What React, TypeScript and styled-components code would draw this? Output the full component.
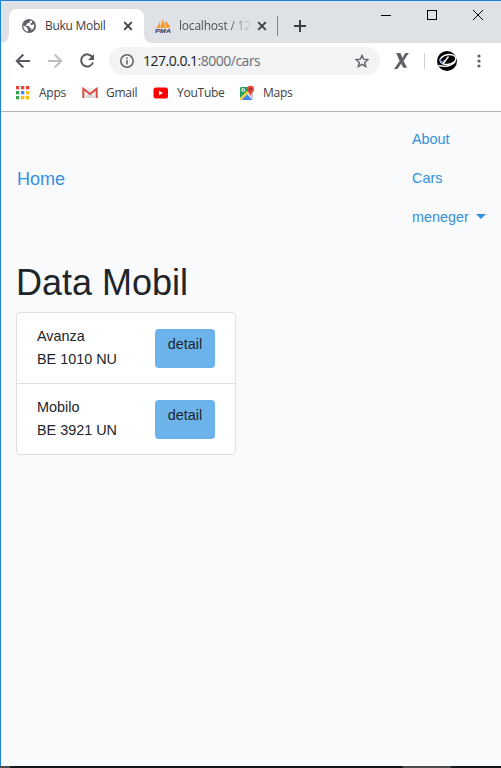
import React from 'react';
import styled, { createGlobalStyle } from 'styled-components';

const GlobalStyle = createGlobalStyle`
  * { box-sizing: border-box; }
  html, body { margin: 0; padding: 0; overflow: hidden; }
  svg { display: block; flex: none; }
`;

const Desktop = styled.div`
  width: 501px;
  height: 768px;
  display: flex;
  flex-direction: column;
  background: #111820;
`;

const BrowserWindow = styled.div`
  height: 766px;
  display: flex;
  flex-direction: column;
  border-top: 1px solid #1883d7;
  border-left: 1px solid #1883d7;
  background: #fff;
  font-family: 'Open Sans', 'Noto Sans', sans-serif;
  font-size: 12px;
  color: #3c4043;
`;

const TabStrip = styled.div`
  height: 42px;
  flex: none;
  display: flex;
  align-items: flex-end;
  background: #dee1e6;
`;

const Flare = styled.svg`
  width: 8px;
  height: 8px;
`;

const Tab = styled.div<{ $active?: boolean }>`
  height: 34px;
  width: ${p => (p.$active ? 135 : 125)}px;
  display: flex;
  align-items: center;
  padding-left: ${p => (p.$active ? 13 : 3)}px;
  background: ${p => (p.$active ? '#fff' : 'transparent')};
  border-radius: 8px 8px 0 0;
`;

const TabTitle = styled.span<{ $fade?: boolean }>`
  width: ${p => (p.$fade ? 71 : 70)}px;
  flex: none;
  margin-left: ${p => (p.$fade ? 7 : 9)}px;
  margin-right: ${p => (p.$fade ? 4 : 5)}px;
  line-height: 18px;
  letter-spacing: ${p => (p.$fade ? '-0.2px' : '-0.28px')};
  white-space: nowrap;
  color: ${p => (p.$fade ? '#4d5156' : '#3c4043')};
  mask-image: ${p => (p.$fade ? 'linear-gradient(90deg, #000 50px, transparent 73px)' : 'none')};
`;

const Separator = styled.i<{ $tab?: boolean }>`
  width: 1px;
  height: ${p => (p.$tab ? 20 : 16)}px;
  background: ${p => (p.$tab ? '#808489' : '#cfd1d4')};
  margin: ${p => (p.$tab ? '0 0 7px' : '0 12px 0 15px')};
`;

const NewTab = styled.div`
  height: 34px;
  display: flex;
  align-items: center;
  margin-left: 16px;
`;

const Controls = styled.div`
  align-self: flex-start;
  display: flex;
  gap: 36px;
  margin: 9px 18px 0 auto;
`;

const Toolbar = styled.div`
  height: 36px;
  flex: none;
  display: flex;
  align-items: center;
  padding-left: 14px;
`;

const NavIcons = styled.div`
  display: flex;
  gap: 16px;
  width: 94px;
`;

const AddressBar = styled.div`
  width: 271px;
  height: 28px;
  border-radius: 14px;
  display: flex;
  align-items: center;
  padding: 0 11px;
  background: #f1f3f4;
`;

const Address = styled.span`
  flex: 1;
  margin-left: 9px;
  font-size: 14px;
  line-height: 20px;
  letter-spacing: -0.5px;
  color: #202124;
`;

const AddressPath = styled.span`
  color: #6b6f74;
`;

const ExtensionIcon = styled.svg`
  margin-left: 14px;
`;

const MenuIcon = styled.svg`
  margin-left: 20px;
`;

const Bookmarks = styled.div`
  height: 33px;
  flex: none;
  display: flex;
  align-items: center;
  padding: 0 0 4px 13px;
  border-bottom: 1px solid #b2b4b6;
`;

const Bookmark = styled.div<{ $width: number; $gap: number }>`
  width: ${p => p.$width}px;
  display: flex;
  align-items: center;
  gap: ${p => p.$gap}px;
  line-height: 18px;
  letter-spacing: -0.25px;
`;

const Page = styled.main`
  flex: 1;
  background: #f8fafc;
  padding-left: 15px;
  font-family: 'Liberation Sans', Arial, sans-serif;
  font-size: 14.4px;
  line-height: 23px;
  color: #212529;
`;

const Navbar = styled.nav`
  height: 133px;
  display: flex;
  align-items: center;
  justify-content: space-between;
  padding: 8px 16px 8px 1px;
  color: #3490dc;
`;

const Brand = styled.a`
  padding-top: 2px;
  font-size: 18px;
  line-height: 29px;
`;

const NavList = styled.div`
  width: 73px;
`;

const NavLink = styled.a`
  display: flex;
  align-items: center;
  padding: 8px 0;
  white-space: nowrap;
`;

const Caret = styled.i`
  margin: 0 0 3px 7px;
  border: 5px solid transparent;
  border-top-color: #3490dc;
  border-bottom: 0;
`;

const Heading = styled.h1`
  margin: 16px 0 8px;
  font-size: 36px;
  line-height: 43px;
  font-weight: 400;
`;

const CarList = styled.div`
  width: 220px;
  border: 1px solid #dfdfdf;
  border-radius: 4px;
  background: #fff;
`;

const CarRow = styled.div`
  display: flex;
  justify-content: space-between;
  padding: 12px 20px;
  & + & { border-top: 1px solid #dfdfdf; }
`;

const DetailButton = styled.a`
  width: 60px;
  height: 39px;
  margin-top: 4px;
  padding-top: 4px;
  border-radius: 4px;
  background: #6cb2eb;
  text-align: center;
`;

const Taskbar = styled.div`
  height: 2px;
  display: flex;
  justify-content: space-between;
  padding-right: 50px;
`;

const TaskItem = styled.i<{ $width: number }>`
  width: ${p => p.$width}px;
  background: #4a4d50;
`;

const CloseIcon = () => (
  <svg width="16" height="16" viewBox="0 0 16 16" stroke="#3c4043" strokeWidth="1.9"><path d="M4.2 4.2l7.6 7.6M11.8 4.2l-7.6 7.6" /></svg>
);

const GlobeIcon = () => (
  <svg width="14" height="14" viewBox="0 0 14 14">
    <circle cx="7" cy="7" r="7" fill="#5f6368" />
    <path d="M8 1.4v1.3L6.4 4.2H5v1.5H3.7V7h3.8v2H9v1.5h1.3c1.9-1.6 2.3-3.8 1.7-5h-1.8v.6H8.7V3.9h1.4V2.2A6 6 0 0 0 8 1.4zM1.4 6.4v1.8c.6 2.4 2.5 4.1 4.7 4.4v-2.3H5.2V8.6z" fill="#fff" />
  </svg>
);

const PmaIcon = () => (
  <svg width="17" height="16" viewBox="0 0 17 16">
    <path d="M1 10c2-2 3-4 4-7l.5 7zM5.5 10L7.5 1C9 4 10 6.5 10.5 10zM11 9.8L10 3c2.5 1.6 4.5 4 5.5 6.8z" fill="#f79a32" />
    <text x="0" y="15.3" fontFamily="Liberation Sans" fontSize="5.8" fontWeight="700" fontStyle="italic" fill="#30365f" textLength="16" lengthAdjust="spacingAndGlyphs">PMA</text>
  </svg>
);

const appColors = ['#ea4335', '#ea4335', '#ea4335', '#34a853', '#4285f4', '#fbbc05', '#34a853', '#fbbc05', '#fbbc05'];

const AppsIcon = () => (
  <svg width="18" height="14" viewBox="0 0 18 14">
    {appColors.map((c, i) => <rect key={i} x={2 + (i % 3) * 5} y={Math.floor(i / 3) * 5} width="3.3" height="3.3" fill={c} />)}
  </svg>
);

const GmailIcon = () => (
  <svg width="16" height="14" viewBox="0 0 16 14">
    <path d="M1 2h14v10H1z" fill="#eeeeee" /><path d="M2 12l6-5 6 5z" fill="#d8d8d8" />
    <path d="M1.3 12V2.7L8 8l6.7-5.3V12" fill="none" stroke="#da4c43" strokeWidth="2" />
  </svg>
);

const YoutubeIcon = () => (
  <svg width="16" height="14" viewBox="0 0 16 14"><rect x="0.5" y="1.6" width="14.5" height="10.8" rx="2.5" fill="#f00" /><path d="M6 4.7v4.6l4-2.3z" fill="#fff" /></svg>
);

const MapsIcon = () => (
  <svg width="16" height="16" viewBox="0 0 16 16">
    <rect x="1" y="2" width="13" height="13" rx="1.5" fill="#dce0e4" />
    <path d="M2 2h9L8 8l-7 6V3z" fill="#28a15f" />
    <path d="M1 13l7-7 2 2-7 7H1z" fill="#fbd14b" /><path d="M2.5 15l5.5-5.5 5.5 5.5z" fill="#4285f4" /><path d="M10 9l4 5V7z" fill="#c5c8cc" />
    <circle cx="4.2" cy="5" r="1.5" fill="none" stroke="#fff" />
    <path d="M11.5 11C11 8 8.2 7 8.2 4.2a3.4 3.4 0 0 1 6.8 0C15 7 12 8 11.5 11z" fill="#e54335" /><circle cx="11.6" cy="4.2" r="1.2" fill="#84302b" />
  </svg>
);

const bookmarks = [
  { label: 'Apps', width: 68, gap: 7, icon: <AppsIcon /> },
  { label: 'Gmail', width: 71, gap: 8, icon: <GmailIcon /> },
  { label: 'YouTube', width: 86, gap: 8, icon: <YoutubeIcon /> },
  { label: 'Maps', width: 70, gap: 8, icon: <MapsIcon /> },
];

const cars = [
  { name: 'Avanza', plate: 'BE 1010 NU' },
  { name: 'Mobilo', plate: 'BE 3921 UN' },
];

export default function App() {
  return (
    <Desktop>
      <GlobalStyle />
      <BrowserWindow>
        <TabStrip>
          <Flare><path d="M8 0A8 8 0 0 1 0 8H8Z" fill="#fff" /></Flare>
          <Tab $active><GlobeIcon /><TabTitle>Buku Mobil</TabTitle><CloseIcon /></Tab>
          <Flare><path d="M0 0A8 8 0 0 0 8 8H0Z" fill="#fff" /></Flare>
          <Tab><PmaIcon /><TabTitle $fade>localhost / 12</TabTitle><CloseIcon /></Tab>
          <Separator $tab />
          <NewTab><svg width="12" height="12" stroke="#3c4043" strokeWidth="2"><path d="M6 0v12M0 6h12" /></svg></NewTab>
          <Controls>
            <svg width="10" height="10" shapeRendering="crispEdges"><path d="M0 5.5h10" stroke="#000" /></svg>
            <svg width="10" height="10" shapeRendering="crispEdges"><rect x=".5" y=".5" width="9" height="9" fill="none" stroke="#000" /></svg>
            <svg width="10" height="10"><path d="M0 0l10 10M10 0L0 10" stroke="#000" /></svg>
          </Controls>
        </TabStrip>
        <Toolbar>
          <NavIcons>
            <svg width="16" height="16" fill="none" stroke="#55595e" strokeWidth="2"><path d="M15 8H2M8.3 1.5L1.8 8l6.5 6.5" /></svg>
            <svg width="16" height="16" fill="none" stroke="#bbbdbf" strokeWidth="2"><path d="M1 8h13M7.7 1.5L14.2 8l-6.5 6.5" /></svg>
            <svg width="16" height="16" fill="none" stroke="#55595e" strokeWidth="2"><path d="M13.4 4.2A6.1 6.1 0 1 0 14 9.5" /><path d="M15 1v6H9z" fill="#55595e" stroke="none" /></svg>
          </NavIcons>
          <AddressBar>
            <svg width="14" height="14" fill="none" stroke="#5f6368" strokeWidth="1.5"><circle cx="7" cy="7" r="6.2" /><path d="M7 6v4.5M7 3.5V5" /></svg>
            <Address>127.0.0.1<AddressPath>:8000/cars</AddressPath></Address>
            <svg width="14" height="14" viewBox="0 0 14 14" fill="none" stroke="#5f6368" strokeWidth="1.4"><path d="M7 1.4l1.7 3.8 4.2.4-3.2 2.8 1 4.1L7 10.3l-3.7 2.2 1-4.1-3.2-2.8 4.2-.4z" /></svg>
          </AddressBar>
          <ExtensionIcon width="15" height="16"><path d="M2.5 0h3.7L8.3 5.2 11.5 0h3L9.3 8l3.5 6.5H9.3L7.2 10.3 3.3 16H.3L5.8 8z" fill="#5f6063" stroke="#5f6063" strokeWidth=".4" /></ExtensionIcon>
          <Separator />
          <svg width="20" height="20" viewBox="0 0 20 20">
            <circle cx="10" cy="10" r="10" fill="#000" />
            <ellipse cx="11" cy="8.5" rx="8" ry="4.8" fill="none" stroke="#fff" strokeWidth="1.4" transform="rotate(-10 11 8.5)" />
            <path d="M3 8l2 4 3-3" fill="none" stroke="#628fc5" strokeWidth="1.5" /><path d="M6 13l5.5-7.5" stroke="#fff" strokeWidth="1.3" /><path d="M1.5 14.5c6 1.5 13 .5 17-4" stroke="#fff" strokeWidth="1.3" fill="none" />
          </svg>
          <MenuIcon width="4" height="14" fill="#5f6368"><circle cx="2" cy="2" r="1.6" /><circle cx="2" cy="7" r="1.6" /><circle cx="2" cy="12" r="1.6" /></MenuIcon>
        </Toolbar>
        <Bookmarks>
          {bookmarks.map(b => <Bookmark key={b.label} $width={b.width} $gap={b.gap}>{b.icon}{b.label}</Bookmark>)}
        </Bookmarks>
        <Page>
          <Navbar>
            <Brand>Home</Brand>
            <NavList><NavLink>About</NavLink><NavLink>Cars</NavLink><NavLink>meneger<Caret /></NavLink></NavList>
          </Navbar>
          <Heading>Data Mobil</Heading>
          <CarList>
            {cars.map(car => (
              <CarRow key={car.plate}><div><div>{car.name}</div><div>{car.plate}</div></div><DetailButton>detail</DetailButton></CarRow>
            ))}
          </CarList>
        </Page>
      </BrowserWindow>
      <Taskbar><TaskItem $width={10} /><TaskItem $width={48} /></Taskbar>
    </Desktop>
  );
}
